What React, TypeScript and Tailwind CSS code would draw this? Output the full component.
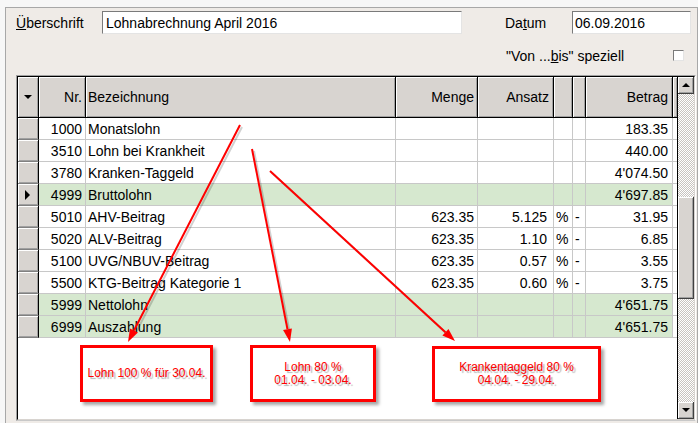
import React from "react";

type Row = {
  nr: string;
  name: string;
  menge?: string;
  ansatz?: string;
  pct?: string;
  dash?: string;
  betrag: string;
  green?: boolean;
  current?: boolean;
};

const rows: Row[] = [
  { nr: "1000", name: "Monatslohn", betrag: "183.35" },
  { nr: "3510", name: "Lohn bei Krankheit", betrag: "440.00" },
  { nr: "3780", name: "Kranken-Taggeld", betrag: "4'074.50" },
  { nr: "4999", name: "Bruttolohn", betrag: "4'697.85", green: true, current: true },
  { nr: "5010", name: "AHV-Beitrag", menge: "623.35", ansatz: "5.125", pct: "%", dash: "-", betrag: "31.95" },
  { nr: "5020", name: "ALV-Beitrag", menge: "623.35", ansatz: "1.10", pct: "%", dash: "-", betrag: "6.85" },
  { nr: "5100", name: "UVG/NBUV-Beitrag", menge: "623.35", ansatz: "0.57", pct: "%", dash: "-", betrag: "3.55" },
  { nr: "5500", name: "KTG-Beitrag Kategorie 1", menge: "623.35", ansatz: "0.60", pct: "%", dash: "-", betrag: "3.75" },
  { nr: "5999", name: "Nettolohn", betrag: "4'651.75", green: true },
  { nr: "6999", name: "Auszahlung", betrag: "4'651.75", green: true },
];

const raised = "bg-[#d8d4d0] shadow-[inset_1px_1px_0_#ffffff,inset_-1px_-1px_0_#a0a0a0]";
const head = `h-[41px] shrink-0 flex items-center border-r border-b border-black ${raised}`;

function arrowHead(x1: number, y1: number, x2: number, y2: number, len = 13, half = 4.5) {
  const dx = x2 - x1;
  const dy = y2 - y1;
  const l = Math.hypot(dx, dy);
  const ux = dx / l;
  const uy = dy / l;
  const bx = x2 - ux * len;
  const by = y2 - uy * len;
  return {
    pts: `${x2},${y2} ${bx - uy * half},${by + ux * half} ${bx + uy * half},${by - ux * half}`,
    bx,
    by,
  };
}

const arrows = [
  [240, 125, 128, 342],
  [252, 149, 290, 342],
  [270, 171, 455, 341],
];

function DataRow({ r }: { r: Row }) {
  const bg = r.green ? "bg-[#d6e8cf]" : "bg-white";
  const cell = `h-[22px] shrink-0 flex items-center border-r border-b border-[#c8c8c8] ${bg}`;
  return (
    <div className="flex">
      <div className={`w-[21px] h-[22px] shrink-0 flex items-center justify-center border-r border-r-black border-b border-b-[#808080] ${raised}`}>
        {r.current && <div className="w-0 h-0 border-y-[5px] border-y-transparent border-l-[5px] border-l-black ml-[-1px]" />}
      </div>
      <div className={`${cell} w-[47px] justify-end pr-[3px]`}>{r.nr}</div>
      <div className={`${cell} w-[310px] pl-[2px]`}>{r.name}</div>
      <div className={`${cell} w-[82px] justify-end pr-[3px]`}>{r.menge}</div>
      <div className={`${cell} w-[76px] justify-end pr-[6px]`}>{r.ansatz}</div>
      <div className={`${cell} w-[19px] pl-[2px]`}>{r.pct}</div>
      <div className={`${cell} w-[13px] pl-[2px]`}>{r.dash}</div>
      <div className={`${cell} w-[87px] justify-end pr-[4px]`}>{r.betrag}</div>
      <div className="w-[4px] h-[22px] shrink-0 border-b border-[#c8c8c8] bg-white" />
    </div>
  );
}

export default function App() {
  return (
    <div className="relative w-[698px] h-[423px] overflow-hidden bg-[#f7f7f7] font-['Liberation_Sans',Arial,sans-serif] text-[14px] text-black leading-none">
      <div className="ml-[5px] mt-[7px] w-[693px] h-[416px] border-t border-l border-r border-[#a8a8a8] bg-[#efebe7] pt-[3px]">
        {/* Kopfzeile */}
        <div className="flex items-center h-[23px]">
          <div className="ml-[10px] w-[86px]">
            <span className="underline">Ü</span>berschrift
          </div>
          <div className="w-[360px] h-[23px] flex items-center pl-[3px] bg-white border border-t-[#7a7a7a] border-l-[#7a7a7a] border-b-[#e4e4e4] border-r-[#e4e4e4]">
            Lohnabrechnung April 2016
          </div>
          <div className="ml-[43px] w-[67px]">
            Da<span className="underline">t</span>um
          </div>
          <div className="w-[119px] h-[23px] flex items-center pl-[2px] bg-white border border-t-[#7a7a7a] border-l-[#7a7a7a] border-b-[#e4e4e4] border-r-[#e4e4e4]">
            06.09.2016
          </div>
        </div>
        <div className="flex items-center h-[21px] mt-[11px]">
          <div className="ml-[500px] w-[167px]">
            "Von ...<span className="underline">b</span>is" speziell
          </div>
          <div className="w-[11px] h-[11px] bg-white border border-t-[#7a7a7a] border-l-[#7a7a7a] border-b-[#e4e4e4] border-r-[#e4e4e4]" />
        </div>

        {/* Tabelle */}
        <div className="ml-[10px] mt-[9px] w-[680px] h-[346px] border border-t-[#a0a0a0] border-l-[#a0a0a0] border-r-white border-b-[#c8c8c8]">
          <div className="w-full h-full flex border border-t-black border-l-black border-r-[#d8d4d0] border-b-[#d8d4d0] bg-white">
            <div className="w-[659px] flex flex-col">
              <div className="flex">
                <div className={`${head} w-[21px] justify-center`}>
                  <div className="w-0 h-0 border-x-[4px] border-x-transparent border-t-[4px] border-t-black" />
                </div>
                <div className={`${head} w-[47px] justify-end pr-[3px]`}>Nr.</div>
                <div className={`${head} w-[310px] pl-[2px]`}>Bezeichnung</div>
                <div className={`${head} w-[82px] justify-end pr-[3px]`}>Menge</div>
                <div className={`${head} w-[76px] justify-end pr-[4px]`}>Ansatz</div>
                <div className={`${head} w-[19px]`} />
                <div className={`${head} w-[13px]`} />
                <div className={`${head} w-[87px] justify-end pr-[4px]`}>Betrag</div>
                <div className={`${head} w-[4px] border-r-0`} />
              </div>
              {rows.map((r) => (
                <DataRow key={r.nr} r={r} />
              ))}
            </div>

            {/* Scrollbar */}
            <div className="w-[17px] flex flex-col border-l border-black">
              <div className={`h-[17px] shrink-0 flex items-center justify-center border-r border-b border-[#404040] ${raised}`}>
                <div className="w-0 h-0 border-x-[4px] border-x-transparent border-b-[4px] border-b-black" />
              </div>
              <div className="flex-1 flex flex-col bg-[repeating-conic-gradient(#c8c4c0_0_25%,#ffffff_0_50%)] [background-size:2px_2px]">
                <div className={`mt-[103px] h-[102px] border-r border-b border-[#404040] ${raised}`} />
              </div>
              <div className={`h-[17px] shrink-0 flex items-center justify-center border-r border-b border-[#404040] ${raised}`}>
                <div className="w-0 h-0 border-x-[4px] border-x-transparent border-t-[4px] border-t-black" />
              </div>
            </div>
          </div>
        </div>
      </div>

      {/* Anmerkungen */}
      <svg className="absolute inset-0 pointer-events-none" width="698" height="423">
        {arrows.map(([x1, y1, x2, y2], i) => {
          const h = arrowHead(x1, y1, x2, y2);
          return (
            <g key={i}>
              <line x1={x1 + 2} y1={y1 + 2} x2={h.bx + 2} y2={h.by + 2} stroke="rgba(0,0,0,0.18)" strokeWidth="2" />
              <line x1={x1} y1={y1} x2={h.bx} y2={h.by} stroke="#ff0000" strokeWidth="2" />
              <polygon points={h.pts} fill="#ff0000" />
            </g>
          );
        })}
      </svg>

      <div className="absolute left-[80px] top-[345px] w-[133px] h-[57px] border-[3px] border-[#ff0000] bg-white shadow-[3px_3px_3px_rgba(0,0,0,0.35)] flex items-center justify-center text-[12px] leading-[13px] text-[#ff0000] [text-shadow:2px_2px_1px_rgba(0,0,0,0.3)]">
        Lohn 100 % für 30.04.
      </div>
      <div className="absolute left-[250px] top-[345px] w-[126px] h-[57px] border-[3px] border-[#ff0000] bg-white shadow-[3px_3px_3px_rgba(0,0,0,0.35)] flex flex-col items-center justify-center text-[12px] leading-[13px] text-[#ff0000] [text-shadow:2px_2px_1px_rgba(0,0,0,0.3)]">
        <span>Lohn 80 %</span>
        <span>01.04. - 03.04.</span>
      </div>
      <div className="absolute left-[432px] top-[346px] w-[169px] h-[56px] border-[3px] border-[#ff0000] bg-white shadow-[3px_3px_3px_rgba(0,0,0,0.35)] flex flex-col items-center justify-center text-[12px] leading-[13px] text-[#ff0000] [text-shadow:2px_2px_1px_rgba(0,0,0,0.3)]">
        <span>Krankentaggeld 80 %</span>
        <span>04.04. - 29.04.</span>
      </div>
    </div>
  );
}
